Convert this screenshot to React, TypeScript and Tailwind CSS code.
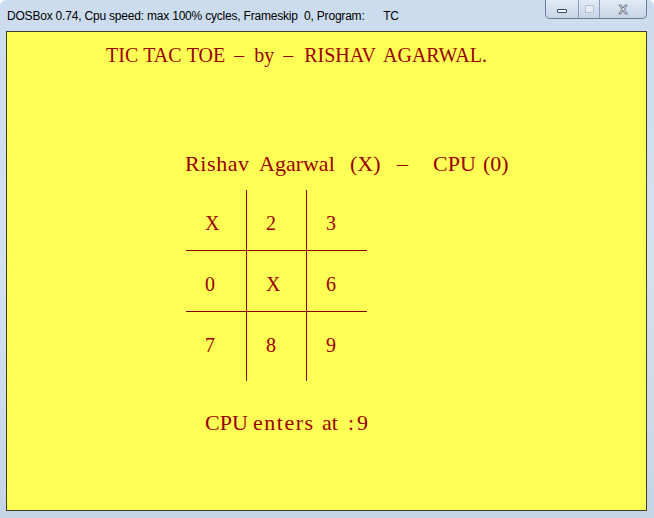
import React from "react";

const serif = { fontFamily: '"Liberation Serif", "Times New Roman", serif' };

export default function App() {
  const cells = [
    ["X", "2", "3"],
    ["0", "X", "6"],
    ["7", "8", "9"],
  ];
  const colW = ["w-[61px]", "w-[60px]", "w-[60px]"];
  const rowH = ["h-[61px]", "h-[61px]", "h-[69px]"];
  return (
    <div className="w-[654px] h-[518px] bg-gradient-to-b from-[#cbdcee] via-[#d4e1ef] to-[#c6d5e6] flex flex-col overflow-hidden rounded-t-[6px]">
      {/* title bar */}
      <div className="h-[31px] flex items-start relative">
        <div
          className="pl-[7px] pt-[7px] text-[12px] tracking-[-0.2px] text-black whitespace-pre"
          style={{ fontFamily: '"Liberation Sans", Arial, sans-serif' }}
        >
          DOSBox 0.74, Cpu speed: max 100% cycles, Frameskip  0, Program:      TC
        </div>
        <div className="absolute right-[7px] top-0 flex h-[19px] border border-t-0 border-[#6d7f98] rounded-b-[5px] overflow-hidden bg-gradient-to-b from-[#e3ecf6] to-[#c5d4e6]">
          <div className="w-[33px] h-full flex items-center justify-center border-r border-[#8a9bb3]">
            <div className="w-[10px] h-[4px] bg-white border border-[#3b4b63] rounded-[1px] mt-[3px]" />
          </div>
          <div className="w-[21px] h-full flex items-center justify-center border-r border-[#8a9bb3]">
            <div className="w-[9px] h-[8px] border border-[#b7c3d3] bg-[#e6edf5]" />
          </div>
          <div className="w-[46px] h-full flex items-center justify-center">
            <span
              className="text-[13px] font-bold text-white leading-none"
              style={{ fontFamily: '"Liberation Sans", Arial, sans-serif', WebkitTextStroke: "0.6px #3b4b63" }}
            >
              X
            </span>
          </div>
        </div>
      </div>
      {/* client area */}
      <div
        className="ml-[6px] mr-[7px] h-[480px] bg-[#ffff55] border border-[#3d3d2a] text-[#990000] flex flex-col"
        style={serif}
      >
        {/* heading */}
        <div className="pl-[99px] pt-[13px] flex text-[20px] leading-none whitespace-pre">
          <span className="mr-[5px]">TIC</span>
          <span className="mr-[5px]">TAC</span>
          <span className="mr-[9px]">TOE</span>
          <span className="mr-[10px]">–</span>
          <span className="mr-[9px]">by</span>
          <span className="mr-[11px]">–</span>
          <span className="mr-[7px]">RISHAV</span>
          <span>AGARWAL.</span>
        </div>
        {/* players */}
        <div className="pl-[178px] pt-[88px] flex text-[22px] leading-none whitespace-pre">
          <span className="w-[74px] tracking-[0.6px]">Rishav</span>
          <span className="w-[91px]">Agarwal</span>
          <span className="w-[47px]">(X)</span>
          <span className="w-[36px]">–</span>
          <span className="w-[50px]">CPU</span>
          <span>(0)</span>
        </div>
        {/* board */}
        <div className="ml-[179px] mt-[15px] flex flex-col w-[181px]">
          {cells.map((row, r) => (
            <div
              key={r}
              className={"flex " + rowH[r] + (r < 2 ? " border-b border-[#8a0000]" : "")}
            >
              {row.map((c, i) => (
                <div
                  key={i}
                  className={
                    colW[i] +
                    " h-full flex items-start pl-[19px] pt-[23px] text-[20px] leading-none" +
                    (i < 2 ? " border-r border-[#8a0000]" : "")
                  }
                >
                  {c}
                </div>
              ))}
            </div>
          ))}
        </div>
        {/* status */}
        <div className="pl-[198px] pt-[31px] flex text-[22px] leading-none whitespace-pre">
          <span className="w-[48px]">CPU</span>
          <span className="w-[69px] tracking-[1.5px]">enters</span>
          <span className="w-[26px]">at</span>
          <span className="w-[9px]">:</span>
          <span>9</span>
        </div>
      </div>
    </div>
  );
}
